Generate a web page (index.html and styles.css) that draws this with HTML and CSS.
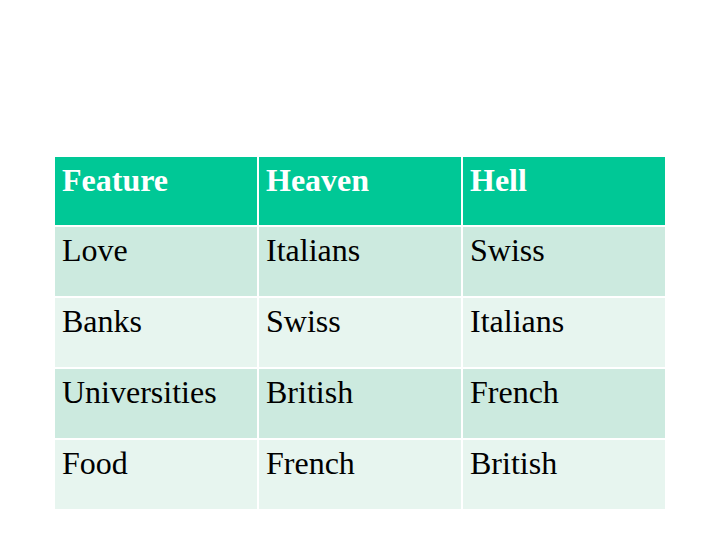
FILE: index.html
```html
<!DOCTYPE html>
<html>
<head>
<meta charset="utf-8">
<link rel="stylesheet" href="styles.css">
</head>
<body>
<table class="grid">
  <tr class="head"><td>Feature</td><td>Heaven</td><td>Hell</td></tr>
  <tr class="odd"><td>Love</td><td>Italians</td><td>Swiss</td></tr>
  <tr class="even"><td>Banks</td><td>Swiss</td><td>Italians</td></tr>
  <tr class="odd"><td>Universities</td><td>British</td><td>French</td></tr>
  <tr class="even"><td>Food</td><td>French</td><td>British</td></tr>
</table>
</body>
</html>
```
FILE: styles.css
```css
html, body {
  margin: 0;
  padding: 0;
  background: #ffffff;
}
body {
  width: 720px;
  height: 540px;
  overflow: hidden;
  font-family: "Liberation Serif", "Times New Roman", serif;
}
.grid {
  border-collapse: separate;
  border-spacing: 2px;
  margin: 155px 0 0 53px;
}
.grid td {
  width: 202px;
  height: 69px;
  padding: 5px 0 0 7px;
  vertical-align: top;
  font-size: 32px;
  line-height: 37px;
  color: #000;
  box-sizing: border-box;
}
.grid .head td {
  height: 68px;
  background: #00c896;
  color: #fff;
  font-weight: bold;
}
.grid .odd td { background: #cceadf; }
.grid .even td { background: #e7f5ef; }
```
